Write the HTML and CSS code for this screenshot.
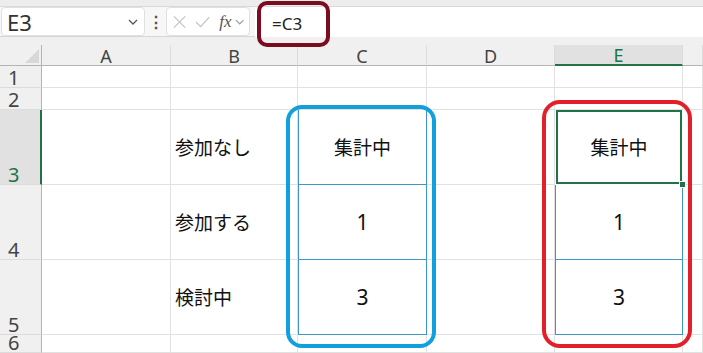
FILE: index.html
```html
<!DOCTYPE html>
<html lang="ja">
<head>
    <meta charset="UTF-8">
    <title>Sheet</title>
    <link rel="stylesheet" href="styles.css">
</head>
<body>
    <div class="app">
        <div class="top-strip"></div>

        <div class="formula-row">
            <div class="name-box">
                <span class="name-text">E3</span>
                <svg class="chev" width="10" height="6" viewBox="0 0 10 6"><path d="M1 1 L5 5 L9 1" fill="none" stroke="#555" stroke-width="1.3"/></svg>
            </div>
            <div class="dots">⋮</div>
            <div class="fx-box">
                <svg width="14" height="14" viewBox="0 0 14 14"><path d="M1 1 L13 13 M13 1 L1 13" stroke="#c4c4c4" stroke-width="1.3"/></svg>
                <svg width="16" height="14" viewBox="0 0 16 14"><path d="M1 7 L6 12 L15 2" fill="none" stroke="#c4c4c4" stroke-width="1.3"/></svg>
                <span class="fx">fx</span>
                <svg class="chev" width="10" height="6" viewBox="0 0 10 6"><path d="M1 1 L5 5 L9 1" fill="none" stroke="#999" stroke-width="1.2"/></svg>
            </div>
            <div class="formula-input">=C3</div>
        </div>

        <div class="gap-row"></div>

        <div class="sheet">
            <!-- header row -->
            <div class="corner"><span class="corner-tri"></span></div>
            <div class="col-head">A</div>
            <div class="col-head">B</div>
            <div class="col-head">C</div>
            <div class="col-head">D</div>
            <div class="col-head active">E</div>
            <div class="col-head"></div>

            <!-- row 1 -->
            <div class="row-head">1</div>
            <div class="cell"></div><div class="cell"></div><div class="cell"></div>
            <div class="cell"></div><div class="cell"></div><div class="cell"></div>

            <!-- row 2 -->
            <div class="row-head">2</div>
            <div class="cell"></div><div class="cell"></div><div class="cell"></div>
            <div class="cell"></div><div class="cell"></div><div class="cell"></div>

            <!-- row 3 -->
            <div class="row-head active">3</div>
            <div class="cell"></div>
            <div class="cell label">参加なし</div>
            <div class="cell boxed">集計中</div>
            <div class="cell"></div>
            <div class="cell boxed selected">集計中<span class="fill-handle"></span></div>
            <div class="cell"></div>

            <!-- row 4 -->
            <div class="row-head">4</div>
            <div class="cell"></div>
            <div class="cell label">参加する</div>
            <div class="cell boxed num">1</div>
            <div class="cell"></div>
            <div class="cell boxed num">1</div>
            <div class="cell"></div>

            <!-- row 5 -->
            <div class="row-head">5</div>
            <div class="cell"></div>
            <div class="cell label">検討中</div>
            <div class="cell boxed num">3</div>
            <div class="cell"></div>
            <div class="cell boxed num">3</div>
            <div class="cell"></div>

            <!-- row 6 -->
            <div class="row-head">6</div>
            <div class="cell"></div><div class="cell"></div><div class="cell"></div>
            <div class="cell"></div><div class="cell"></div><div class="cell"></div>
        </div>

        <!-- hand-drawn annotation rings -->
        <div class="ring ring-formula"></div>
        <div class="ring ring-blue"></div>
        <div class="ring ring-red"></div>
    </div>
</body>
</html>
```

FILE: styles.css
```css
* {
    box-sizing: border-box;
}

body {
    margin: 0;
    background: #fff;
    font-family: "Noto Sans", "Noto Sans CJK JP", sans-serif;
    color: #222;
    overflow: hidden;
}

.app {
    position: relative;
    width: 703px;
    height: 353px;
    overflow: hidden;
}

.top-strip {
    height: 7px;
    background: #ededed;
    border-bottom: 1px solid #d9d9d9;
}

.formula-row {
    display: flex;
    align-items: center;
    height: 30px;
    background: #f7f7f7;
    border-bottom: 1px solid #d6d6d6;
}

.name-box {
    display: flex;
    align-items: center;
    justify-content: space-between;
    width: 144px;
    height: 29px;
    margin-left: 1px;
    padding: 0 6px 0 5px;
    background: #fff;
    border: 1px solid #e0e0e0;
    border-radius: 4px;
}

.name-text {
    font-size: 22px;
    color: #333;
    line-height: 1;
}

.dots {
    width: 21px;
    text-align: center;
    font-size: 16px;
    font-weight: bold;
    color: #555;
}

.fx-box {
    display: flex;
    align-items: center;
    gap: 9px;
    width: 84px;
    height: 29px;
    padding: 0 5px 0 6px;
    background: #fff;
    border: 1px solid #e0e0e0;
    border-radius: 4px;
}

.fx-box .chev {
    margin-left: -6px;
}

.fx {
    font-family: "Liberation Serif", serif;
    font-style: italic;
    font-size: 17px;
    color: #555;
    line-height: 1;
}

.formula-input {
    flex: 1;
    height: 30px;
    margin-left: 5px;
    padding: 5px 0 0 17px;
    background: #fff;
    font-size: 17px;
    color: #222;
}

.gap-row {
    height: 8px;
    background: #f0f0f0;
}

.sheet {
    display: grid;
    grid-template-columns: 42px 129px 127px 129px 128px 128px 20px;
    grid-template-rows: 21px 22px 22px 75px 75px 75px 18px;
}

.corner {
    position: relative;
    background: #f0f0f0;
    border-right: 1px solid #b4b4b4;
    border-bottom: 1px solid #b4b4b4;
}

.corner-tri {
    position: absolute;
    right: 2px;
    bottom: 2px;
    width: 0;
    height: 0;
    border-left: 14px solid transparent;
    border-bottom: 14px solid #d8d8d8;
}

.col-head {
    display: flex;
    align-items: center;
    justify-content: center;
    background: #f0f0f0;
    border-right: 1px solid #dcdcdc;
    border-bottom: 1px solid #b4b4b4;
    font-size: 18px;
    color: #444;
    padding-top: 1px;
}

.col-head.active {
    background: #e1e1e1;
    color: #217346;
    border-bottom: 2px solid #217346;
}

.row-head {
    display: flex;
    align-items: flex-end;
    padding: 0 0 0 8px;
    background: #f0f0f0;
    border-right: 1px solid #b4b4b4;
    border-bottom: 1px solid #dcdcdc;
    font-size: 20px;
    line-height: 0.95;
    color: #444;
}

.row-head.active {
    background: #e1e1e1;
    color: #217346;
    border-right: 2px solid #217346;
}

.cell {
    position: relative;
    display: flex;
    align-items: center;
    border-right: 1px solid #e1e1e1;
    border-bottom: 1px solid #e1e1e1;
    font-size: 19px;
    color: #111;
}

.label {
    padding-left: 4px;
}

.boxed {
    justify-content: center;
    border: 1px solid #3c96c8;
    border-top: none;
}

.num {
    font-size: 21px;
}

.selected {
    box-shadow: inset 0 0 0 2px #217346;
    border-color: transparent;
}

.fill-handle {
    position: absolute;
    z-index: 2;
    right: -4px;
    bottom: -4px;
    width: 7px;
    height: 7px;
    background: #217346;
    border: 1px solid #fff;
}

.ring {
    position: absolute;
    border-style: solid;
    pointer-events: none;
}

.ring-formula {
    left: 257px;
    top: 1px;
    width: 73px;
    height: 46px;
    border-width: 4px;
    border-color: #7b0c1f;
    border-radius: 10px;
}

.ring-blue {
    left: 286px;
    top: 105px;
    width: 150px;
    height: 243px;
    border-width: 4px;
    border-color: #12a0dc;
    border-radius: 16px;
}

.ring-red {
    left: 542px;
    top: 100px;
    width: 150px;
    height: 248px;
    border-width: 4px;
    border-color: #e3202a;
    border-radius: 18px;
}
```
